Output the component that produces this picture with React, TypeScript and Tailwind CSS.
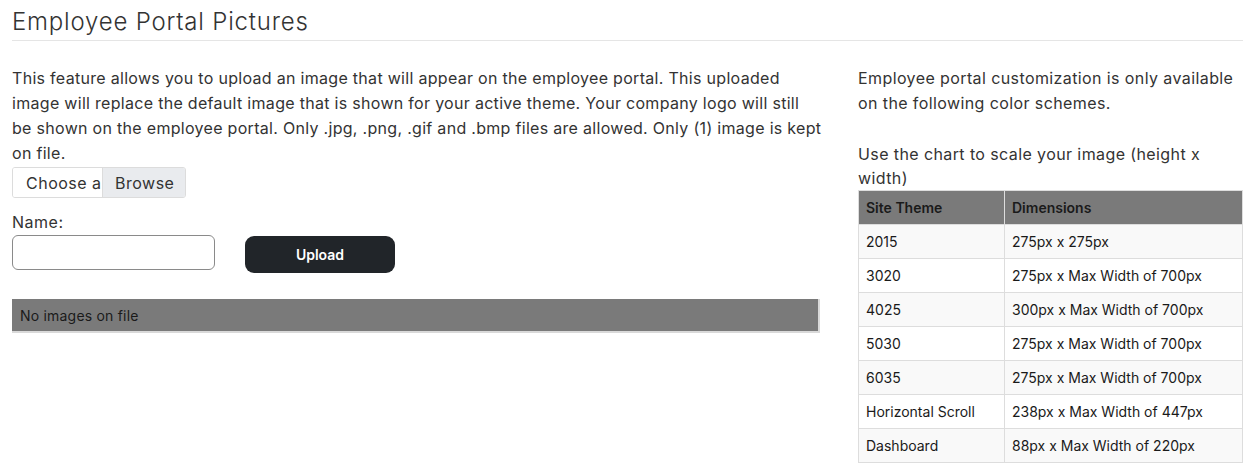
import React from 'react'

const rows: [string, string][] = [
  ['2015', '275px x 275px'],
  ['3020', '275px x Max Width of 700px'],
  ['4025', '300px x Max Width of 700px'],
  ['5030', '275px x Max Width of 700px'],
  ['6035', '275px x Max Width of 700px'],
  ['Horizontal Scroll', '238px x Max Width of 447px'],
  ['Dashboard', '88px x Max Width of 220px'],
]

const font = { fontFamily: 'Inter, "Liberation Sans", sans-serif' }

export default function App() {
  return (
    <div className="min-h-[471px] bg-white px-3 text-[#212529]" style={font}>
      <h2 className="pt-[7px] pb-[3px] text-[24px] font-light leading-[30px] tracking-[0.8px] text-[#333]">Employee Portal Pictures</h2>
      <div className="border-t border-[#e5e5e5]" />

      <div className="mt-[25px] flex">
        <div className="w-[808px]">
          <p className="w-[832px] text-[16px] leading-[25px] tracking-[0.3px] text-[#333]">
            This feature allows you to upload an image that will appear on the employee portal. This uploaded
            <br />
            image will replace the default image that is shown for your active theme. Your company logo will still
            <br />
            be shown on the employee portal. Only .jpg, .png, .gif and .bmp files are allowed. Only (1) image is kept
            <br />
            on file.
          </p>

          <div className="mt-[1px] flex h-[31px] w-[174px] overflow-hidden rounded-[3px] border border-[#dcdcdc] text-[16px] tracking-[0.5px] text-[#333]">
            <span className="flex w-[89px] items-center overflow-hidden whitespace-nowrap bg-white pl-[13px]">Choose a</span>
            <span className="flex flex-1 items-center border-l border-[#dcdcdc] bg-[#e9ebee] pl-[12px]">Browse</span>
          </div>

          <div className="mt-[13px] text-[16px] leading-[22px] tracking-[0.5px] text-[#333]">Name:</div>
          <div className="mt-[2px] flex items-start">
            <input className="h-[35px] w-[203px] rounded-[6px] border border-[#8a8a8a] bg-white px-2 text-sm outline-none" />
            <button className="ml-[30px] mt-[1px] h-[37px] w-[150px] rounded-[9px] bg-[#212529] text-[14px] font-semibold text-white">
              Upload
            </button>
          </div>

          <div className="mt-[26px] flex h-[34px] items-center border-b-2 border-r-2 border-[#d9d9d9] bg-[#7a7a7a] pl-[8px] text-[14px] tracking-[0.2px] text-[#1a1a1a]">
            No images on file
          </div>
        </div>

        <div className="ml-[38px] w-[386px]">
          <p className="text-[16px] leading-[25px] tracking-[0.4px] text-[#333]">
            Employee portal customization is only available on the following color schemes.
          </p>
          <p className="mt-[26px] text-[16px] leading-[24px] tracking-[0.4px] text-[#333]">
            Use the chart to scale your image (height x width)
          </p>
          <table className="w-[385px] border-collapse text-[14px] text-[#1a1a1a]">
            <thead>
              <tr className="h-[34px] bg-[#7a7a7a]">
                <th className="w-[146px] border border-[#dddddd] pl-[7px] text-left font-semibold">Site Theme</th>
                <th className="border border-[#dddddd] pl-[7px] text-left font-semibold">Dimensions</th>
              </tr>
            </thead>
            <tbody>
              {rows.map(([theme, dim], i) => (
                <tr key={theme} className={`h-[34px] ${i % 2 === 0 ? 'bg-[#f9f9f9]' : 'bg-white'}`}>
                  <td className="border border-[#dddddd] pl-[7px]">{theme}</td>
                  <td className="border border-[#dddddd] pl-[7px]">{dim}</td>
                </tr>
              ))}
            </tbody>
          </table>
        </div>
      </div>
    </div>
  )
}
